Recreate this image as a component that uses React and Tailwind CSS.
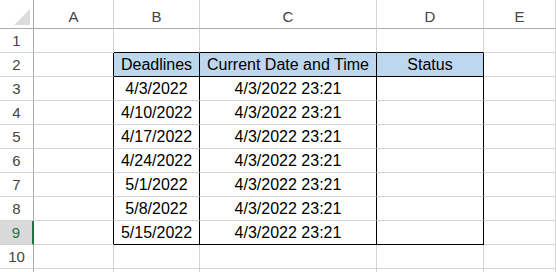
import React from "react";

const COLS = [
  { key: "A", w: "w-[80px]" },
  { key: "B", w: "w-[86px]" },
  { key: "C", w: "w-[177px]" },
  { key: "D", w: "w-[107px]" },
  { key: "E", w: "flex-1" },
];

const deadlines = ["4/3/2022", "4/10/2022", "4/17/2022", "4/24/2022", "5/1/2022", "5/8/2022", "5/15/2022"];
const NOW = "4/3/2022 23:21";

// builds the value of a cell from its row number and column letter
function valueOf(row, col) {
  if (row === 2) {
    if (col === "B") return "Deadlines";
    if (col === "C") return "Current Date and Time";
    if (col === "D") return "Status";
  }
  if (row >= 3 && row <= 9) {
    if (col === "B") return deadlines[row - 3];
    if (col === "C") return NOW;
  }
  return "";
}

function cellClass(row, col) {
  const inTable = row >= 2 && row <= 9 && ["B", "C", "D"].includes(col);
  let right = "border-r-[#d4d4d4]";
  let bottom = "border-b-[#d4d4d4]";
  let bg = "bg-white";
  if (inTable || (col === "A" && row >= 2 && row <= 9)) right = "border-r-black";
  if (["B", "C", "D"].includes(col) && (row === 1 || row === 2 || row === 9)) bottom = "border-b-black";
  if (inTable && row === 2) bg = "bg-[#bdd7ee]";
  return `${right} ${bottom} ${bg}`;
}

export default function App() {
  const rows = Array.from({ length: 11 }, (_, i) => i + 1);

  return (
    <div className="h-[272px] w-[556px] overflow-hidden bg-white font-['Liberation_Sans',Arial,sans-serif]">
      {/* column headers */}
      <div className="flex h-[29px]">
        <div className="relative w-[34px] shrink-0 border-b border-r border-b-[#ababab] border-r-[#ababab] bg-white">
          <svg className="absolute left-[14px] top-[9px]" width="16" height="16" viewBox="0 0 16 16">
            <polygon points="16,0 16,16 0,16" fill="#dcdcdc" />
          </svg>
        </div>
        {COLS.map((c) => (
          <div
            key={c.key}
            className={`${c.w} flex shrink-0 items-end justify-center border-b border-r border-b-[#ababab] border-r-[#d4d4d4] pb-[4px] text-[15px] leading-none text-[#444]`}
          >
            {c.key}
          </div>
        ))}
      </div>

      {rows.map((r) => (
        <div key={r} className="flex h-[24px]">
          <div
            className={
              r === 9
                ? "flex w-[34px] shrink-0 items-end justify-center border-b border-r-2 border-b-[#d4d4d4] border-r-[#217346] bg-[#d9d9d9] pb-[4px] text-[15px] leading-none text-[#217346]"
                : "flex w-[34px] shrink-0 items-end justify-center border-b border-r border-b-[#d4d4d4] border-r-[#ababab] bg-white pb-[4px] text-[15px] leading-none text-[#444]"
            }
          >
            {r <= 10 ? r : ""}
          </div>
          {COLS.map((c) => (
            <div
              key={c.key}
              className={`${c.w} ${cellClass(r, c.key)} flex shrink-0 items-end justify-center overflow-hidden whitespace-nowrap border-b border-r pb-[3px] text-[16px] leading-none text-black`}
            >
              {valueOf(r, c.key)}
            </div>
          ))}
        </div>
      ))}
    </div>
  );
}
